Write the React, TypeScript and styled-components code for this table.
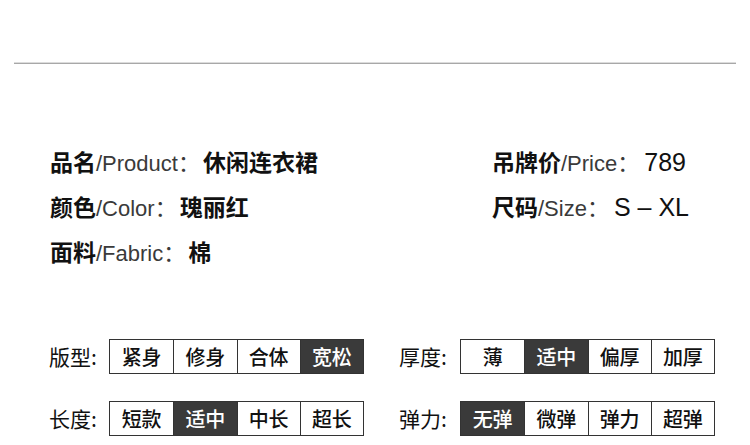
import React from "react";
import styled, { createGlobalStyle } from "styled-components";

const Global = createGlobalStyle`
  html, body { margin: 0; padding: 0; background: #fff; }
  body {
    font-family: "Liberation Sans", "Noto Sans CJK SC", sans-serif;
    color: #111;
  }
`;

const Page = styled.div`
  width: 750px;
  height: 445px;
  overflow: hidden;
  background: #fff;
`;

const Divider = styled.div`
  margin: 62px 14px 0;
  height: 1px;
  border-top: 1px solid #dcdcdc;
  background: #a8a8a8;
`;

const InfoGrid = styled.div`
  margin-top: 76px;
  padding-left: 50px;
  display: grid;
  grid-template-columns: 442px 1fr;
  grid-auto-rows: 45px;
  align-items: center;
`;

const InfoItem = styled.div`
  display: flex;
  align-items: baseline;
  white-space: nowrap;
  line-height: 45px;
`;

const InfoKey = styled.span`
  font-family: "Noto Sans CJK SC", sans-serif;
  font-weight: 700;
  font-size: 23px;
  color: #111;
`;

const InfoEn = styled.span`
  font-family: "Liberation Sans", "Noto Sans CJK SC", sans-serif;
  font-weight: 400;
  font-size: 22px;
  color: #3a3a3a;
`;

const Colon = styled.span`
  font-family: "Noto Sans CJK SC", sans-serif;
  font-size: 22px;
  color: #3a3a3a;
  margin-right: 3px;
`;

const InfoValue = styled.span<{ $latin?: boolean }>`
  font-family: ${(p) =>
    p.$latin ? '"Liberation Sans", sans-serif' : '"Noto Sans CJK SC", sans-serif'};
  font-weight: ${(p) => (p.$latin ? 400 : 700)};
  font-size: ${(p) => (p.$latin ? "25px" : "23px")};
  color: #111;
  margin-left: ${(p) => (p.$latin ? "2px" : "0")};
`;

const OptionGrid = styled.div`
  margin-top: 64px;
  padding-left: 49px;
  display: grid;
  grid-template-columns: 350px 1fr;
  row-gap: 27px;
`;

const OptionRow = styled.div`
  display: flex;
  align-items: center;
`;

const OptionLabel = styled.span<{ $w: number }>`
  width: ${(p) => p.$w}px;
  font-family: "Noto Sans CJK SC", sans-serif;
  font-size: 21px;
  line-height: 35px;
  color: #111;
  white-space: nowrap;
`;

const Segments = styled.div`
  width: 255px;
  height: 35px;
  box-sizing: border-box;
  border: 1px solid #333;
  display: grid;
  grid-template-columns: repeat(4, 1fr);
`;

const Segment = styled.div<{ $active?: boolean }>`
  display: flex;
  align-items: center;
  justify-content: center;
  font-family: "Noto Sans CJK SC", sans-serif;
  font-size: 20px;
  font-weight: 500;
  line-height: 1;
  background: ${(p) => (p.$active ? "#3a3a3a" : "#fff")};
  color: ${(p) => (p.$active ? "#fff" : "#111")};
  & + & {
    border-left: 1px solid #333;
  }
`;

type Opt = { label: string; items: string[]; active: number; w: number };

const options: Opt[] = [
  { label: "版型:", items: ["紧身", "修身", "合体", "宽松"], active: 3, w: 60 },
  { label: "厚度:", items: ["薄", "适中", "偏厚", "加厚"], active: 1, w: 61 },
  { label: "长度:", items: ["短款", "适中", "中长", "超长"], active: 1, w: 60 },
  { label: "弹力:", items: ["无弹", "微弹", "弹力", "超弹"], active: 0, w: 61 },
];

type Info = { key: string; en: string; value: string; latin?: boolean };

const info: Info[] = [
  { key: "品名", en: "/Product", value: "休闲连衣裙" },
  { key: "吊牌价", en: "/Price", value: "789", latin: true },
  { key: "颜色", en: "/Color", value: "瑰丽红" },
  { key: "尺码", en: "/Size", value: "S – XL", latin: true },
  { key: "面料", en: "/Fabric", value: "棉" },
];

export default function App() {
  return (
    <Page>
      <Global />
      <Divider />
      <InfoGrid>
        {info.map((it) => (
          <InfoItem key={it.key}>
            <InfoKey>{it.key}</InfoKey>
            <InfoEn>{it.en}</InfoEn>
            <Colon>：</Colon>
            <InfoValue $latin={it.latin}>{it.value}</InfoValue>
          </InfoItem>
        ))}
      </InfoGrid>
      <OptionGrid>
        {options.map((o) => (
          <OptionRow key={o.label}>
            <OptionLabel $w={o.w}>{o.label}</OptionLabel>
            <Segments>
              {o.items.map((it, i) => (
                <Segment key={it} $active={i === o.active}>
                  {it}
                </Segment>
              ))}
            </Segments>
          </OptionRow>
        ))}
      </OptionGrid>
    </Page>
  );
}
